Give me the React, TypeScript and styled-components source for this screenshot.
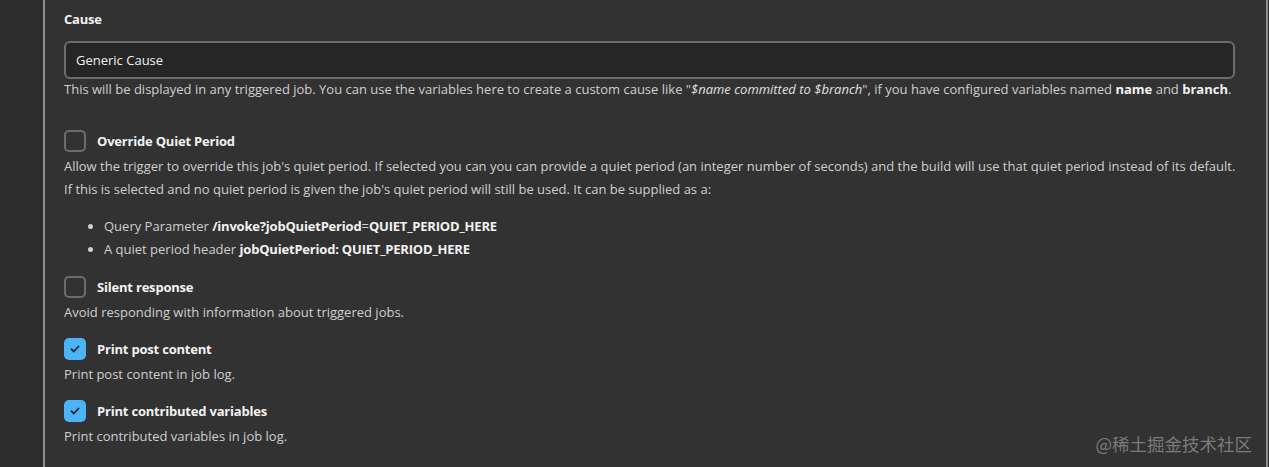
import React from "react"
import styled, { createGlobalStyle } from "styled-components";

const GlobalStyle = createGlobalStyle`
    html, body {
        margin: 0;
        padding: 0;
        background: #2d2d2d;
        font-family: "Segoe UI", "Open Sans", "Noto Sans CJK SC", sans-serif;
    }
`;

const Page = styled.div`
    display: flex;
    width: 1269px;
    height: 467px;
    overflow: hidden;
    background: #2d2d2d;
`;

const Gutter = styled.div`
    width: 43px;
    flex-shrink: 0;
    border-right: 2px solid #8e8e8e;
`;

const Main = styled.div`
    flex: 1;
    background: #323232;
    border-right: 2px solid #8e8e8e;
    margin-right: 1px;
    padding: 9px 0 0 19px;
    position: relative;
    display: flex;
    flex-direction: column;
`;

const Label = styled.div`
    font-size: 13px;
    font-weight: 700;
    line-height: 20px;
    letter-spacing: -0.2px;
    color: #f2f2f2;
`;

const Input = styled.div`
    box-sizing: border-box;
    width: 1171px;
    height: 38px;
    margin-top: 12px;
    padding: 0 10px;
    display: flex;
    align-items: center;
    background: #262626;
    border: 2px solid #6c6c6c;
    border-radius: 6px;
    font-size: 13px;
    color: #f2f2f2;
`;

const Help = styled.div`
    font-size: 13px;
    line-height: 23px;
    color: #cfcfcf;
    margin-top: -1px;

    b { color: #f2f2f2; }
    i { color: #e0e0e0; }
`;

const Option = styled.div<{ $gap: number }>`
    display: flex;
    flex-direction: column;
    margin-top: ${p => p.$gap}px;
`;

const CheckRow = styled.div`
    display: flex;
    align-items: center;
    gap: 11px;
    height: 22px;
`;

const Box = styled.div<{ $checked?: boolean }>`
    box-sizing: border-box;
    width: 22px;
    height: 22px;
    border-radius: 5px;
    display: flex;
    align-items: center;
    justify-content: center;
    background: ${p => p.$checked ? "#4cb3f6" : "transparent"};
    border: ${p => p.$checked ? "none" : "2px solid #6c6c6c"};
`;

const Desc = styled.div`
    margin-top: 3px;
    font-size: 13px;
    line-height: 23px;
    color: #cfcfcf;
`;

const List = styled.ul`
    margin: 14px 0 0;
    padding-left: 40px;
    font-size: 13px;
    line-height: 23px;
    color: #cfcfcf;

    b { color: #f2f2f2; letter-spacing: -0.2px; }
    li::marker { color: #cfcfcf; }
`;

const Watermark = styled.div`
    position: absolute;
    right: 14px;
    bottom: 11px;
    font-size: 17.5px;
    color: #7a7a7a;
    font-family: "Noto Sans CJK SC", sans-serif;
`;

const Check = () => (
    <svg width="12" height="12" viewBox="0 0 12 12" fill="none">
        <path d="M2.5 6.2l2.3 2.3 4.7-5" stroke="#1b2530" strokeWidth="1.8"
            strokeLinecap="round" strokeLinejoin="round" />
    </svg>
)

const CheckOption = ({ label, checked, gap, children } : {
    label: string
    checked?: boolean
    gap: number
    children: React.ReactNode
}) => (
    <Option $gap={gap}>
        <CheckRow>
            <Box $checked={checked}>{ checked ? <Check/> : null }</Box>
            <Label>{ label }</Label>
        </CheckRow>
        { children }
    </Option>
)

export default function App() {
    return (
        <Page>
            <GlobalStyle />
            <Gutter />
            <Main>
                <Label>Cause</Label>
                <Input>Generic Cause</Input>
                <Help>
                    This will be displayed in any triggered job. You can use the variables here to create a custom cause like "<i>$name committed to $branch</i>", if you have configured variables named <b>name</b> and <b>branch</b>.
                </Help>
                <CheckOption label="Override Quiet Period" gap={29}>
                    <Desc>
                        Allow the trigger to override this job's quiet period. If selected you can you can provide a quiet period (an integer number of seconds) and the build will use that quiet period instead of its default.<br/>
                        If this is selected and no quiet period is given the job's quiet period will still be used. It can be supplied as a:
                    </Desc>
                    <List>
                        <li>Query Parameter <b>/invoke?jobQuietPeriod</b>=<b>QUIET_PERIOD_HERE</b></li>
                        <li>A quiet period header <b>jobQuietPeriod: QUIET_PERIOD_HERE</b></li>
                    </List>
                </CheckOption>
                <CheckOption label="Silent response" gap={15}>
                    <Desc>Avoid responding with information about triggered jobs.</Desc>
                </CheckOption>
                <CheckOption label="Print post content" checked gap={14}>
                    <Desc>Print post content in job log.</Desc>
                </CheckOption>
                <CheckOption label="Print contributed variables" checked gap={14}>
                    <Desc>Print contributed variables in job log.</Desc>
                </CheckOption>
                <Watermark>@稀土掘金技术社区</Watermark>
            </Main>
        </Page>
    )
}
